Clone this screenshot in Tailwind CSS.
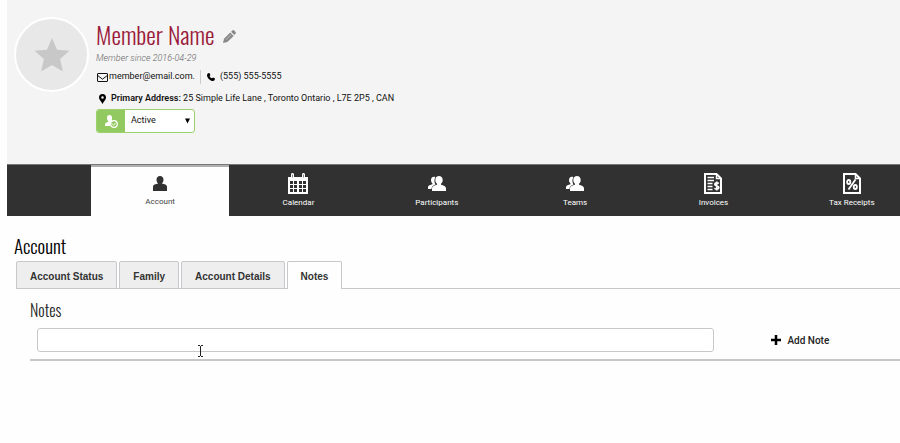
<!DOCTYPE html>
<html lang="en">
<head>
  <meta charset="UTF-8" />
  <meta name="viewport" content="width=device-width, initial-scale=1.0" />
  <title>Member Account</title>
  <script src="https://cdn.jsdelivr.net/npm/@tailwindcss/browser@4"></script>
</head>
<body class="relative min-h-screen overflow-x-hidden bg-[#fefefe] pl-[7px] font-[Roboto,sans-serif] text-[9px] text-[#111]">

  <!-- Shared icons -->
  <svg class="hidden">
    <symbol id="icon-group" viewBox="0 0 18 15">
      <path d="M6 0.8c-2 0-3 1.3-3 3.2 0 1.4.6 2.6 1.4 3.2v1C2.500 8.800 0 9.600 0 11v2h3.500c0-2.400 1.500-3.600 4-4.500C6.200 6.500 6 3.500 7.300 1.200 7 .9 6.500.8 6 .8z" />
      <path d="M11 0C9 0 7.300 1.500 7.300 3.900c0 1.700.7 3 1.700 3.800v1C6.500 9.400 4 10.200 4 12.200V15h14v-2.800c0-2-2.500-2.800-5-3.500v-1c1-.8 1.700-2.100 1.700-3.800C14.700 1.500 13 0 11 0z" />
    </symbol>
  </svg>

  <header class="flex h-[164px] gap-[7px] bg-[#f4f4f4] pt-4 pl-[7px]">
    <div class="mt-px flex size-[75px] shrink-0 items-center justify-center rounded-full border-2 border-white bg-[#e8e8e8]">
      <svg class="size-9 fill-[#c8c8c8]" viewBox="0 0 38 38"><path d="M19 1l5.300 12.500L37.500 14.500 27.500 23.200 30.500 36.500 19 29.500 7.500 36.500 10.500 23.200.5 14.500l13.200-1z" /></svg>
    </div>

    <div>
      <div class="flex h-9 items-center gap-2">
        <h1 class="font-[Oswald,'Roboto_Condensed',Roboto,sans-serif] text-[24px] leading-9 font-light text-[#9b1b3b]">Member Name</h1>
        <button type="button" aria-label="Edit name" class="pt-1">
          <svg class="size-[13px] fill-[#888]" viewBox="0 0 13 13"><path d="M1 8.700L7.200 2.500l3.500 3.500L4.300 12 0 13zM8 1.700L9.500.4c.5-.4 1-.4 1.500 0l1.600 1.600c.4.5.4 1 0 1.500L11.400 5z" /><path d="M3 9.700L8 4.700" fill="none" stroke="#ccc" stroke-width=".8" /></svg>
        </button>
      </div>
      <p class="h-[13px] text-[9px] leading-[13px] font-light text-[#666] italic">Member since 2016-04-29</p>
      <div class="mt-1 flex h-4 items-center text-[9px]">
        <svg class="mx-px h-[9px] w-[11px]" viewBox="0 0 11 9" fill="none" stroke="#111"><rect x=".5" y=".5" width="10" height="8" rx=".5" /><path d="M.7 2.500l4.800 3.700 4.800-3.700" /></svg>
        <a href="mailto:member@email.com" class="pr-[5px]">member@email.com.</a>
        <span class="h-[14px] w-px bg-[#ccc]"></span>
        <svg class="mr-[5px] ml-[6px] size-2 fill-black" viewBox="0 0 9 9"><path d="M1.300.4L2.700 0l1.200 2.200-1 1.100c.4 1.200 1.400 2.200 2.700 2.700l1.200-1L9 6.300l-.4 1.500C7.700 9.200 6 9.200 4.300 8.300 2 7 0 4.700 0 2.500 0 1.500.5.8 1.300.4z" /></svg>
        <a href="tel:5555555555">(555) 555-5555</a>
      </div>
      <p class="mt-1 flex h-5 items-center pl-[3px] text-[9px]">
        <svg class="mr-[5px] h-[10px] w-[7px] fill-black" viewBox="0 0 7 10"><path fill-rule="evenodd" d="M3.500 0A3.500 3.500 0 0 0 0 3.500C0 6 2.500 7.500 3.500 10 4.500 7.500 7 6 7 3.500A3.500 3.500 0 0 0 3.500 0zm0 2.200a1.300 1.300 0 1 1 0 2.600 1.300 1.300 0 0 1 0-2.600z" /></svg>
        <span><b class="font-semibold">Primary Address:</b> 25 Simple Life Lane , Toronto Ontario , L7E 2P5 , CAN</span>
      </p>
      <div class="flex h-6 w-[99px] overflow-hidden rounded-[3px] border border-[#9bd06b] bg-white">
        <label for="status" class="flex w-7 shrink-0 items-center justify-center bg-[#92c961]" aria-label="Member status">
          <svg class="size-[13px]" viewBox="0 0 13 13"><path fill="#fff" d="M4.500 0C2.900 0 2 1.200 2 2.900c0 1.300.5 2.300 1.200 2.900v.9C1.700 7.400 0 7.900 0 9.400V11h5C4.800 8.600 5.800 6.500 7.500 5.600 7 5.400 6.800 5 7 4.200 7.600 1.800 6.500 0 4.500 0z" /><circle cx="9" cy="9" r="3.300" fill="none" stroke="#fff" stroke-width="1.300" /><path d="M7.300 9l1.200 1.200 2.200-2.400" fill="none" stroke="#fff" /></svg>
        </label>
        <div class="relative flex-1">
          <select id="status" class="size-full appearance-none pl-[6px] text-[9px] outline-none">
            <option>Active</option>
            <option>Inactive</option>
          </select>
          <svg class="pointer-events-none absolute top-2 right-1 h-[6px] w-[5px]" viewBox="0 0 5 6"><path d="M0 .5h5L2.500 5.500z" /></svg>
        </div>
      </div>
    </div>
  </header>

  <nav class="flex h-[52px] overflow-hidden border-t border-[#777] bg-[#313131] pl-[84px] text-[8px] leading-3 text-white">
    <a href="#account" class="flex w-[17.100%] shrink-0 flex-col items-center gap-1 border-t-2 border-[#b0b0b0] bg-[#fefefe] pt-2 text-[#444]">
      <svg class="h-[17px] w-[14px] fill-[#313131]" viewBox="0 0 14 17"><path d="M7 1C4.900 1 3.500 2.500 3.500 4.700c0 1.700.8 3.100 1.800 3.900C2.500 9 0 9.700 0 12v4h14v-4c0-2.300-2.500-3-5.300-3.400 1-.8 1.800-2.200 1.800-3.900C10.500 2.500 9.100 1 7 1z" /></svg>
      Account
    </a>
    <a href="#calendar" class="flex w-[17.100%] shrink-0 flex-col items-center gap-[3px] pt-2">
      <svg class="h-[21px] w-5" viewBox="0 0 20 21"><path fill="#fff" d="M0 4h3V1.500C3 .6 3.600 0 4.500 0S6 .6 6 1.500V4h8V1.500c0-.9.6-1.500 1.500-1.500S17 .6 17 1.500V4h3v17H0z" /><path d="M4.500 1.500v3M15.500 1.500v3" stroke="#888" /><path fill="#313131" d="M2 8h3v3H2zm4 0h3v3H6zm5 0h3v3h-3zm4 0h3v3h-3zM2 12h3v3H2zm4 0h3v3H6zm5 0h3v3h-3zm4 0h3v3h-3zM2 16h3v3H2zm4 0h3v3H6zm5 0h3v3h-3zm4 0h3v3h-3z" /></svg>
      Calendar
    </a>
    <a href="#participants" class="flex w-[17.100%] shrink-0 flex-col items-center gap-[6px] pt-[11px]">
      <svg class="h-[15px] w-[18px] fill-white"><use href="#icon-group" /></svg>
      Participants
    </a>
    <a href="#teams" class="flex w-[17.100%] shrink-0 flex-col items-center gap-[6px] pt-[11px]">
      <svg class="h-[15px] w-[18px] fill-white"><use href="#icon-group" /></svg>
      Teams
    </a>
    <a href="#invoices" class="flex w-[17.100%] shrink-0 flex-col items-center gap-[3px] pt-2">
      <svg class="h-[21px] w-[18px]" viewBox="0 0 18 21" fill="none" stroke="#fff"><path stroke-width="2" d="M1 1h11.500L17 5.500V20H1z" /><path d="M12.500 1v4.500H17" stroke-width="1.500" /><path stroke-width="1.500" d="M3.500 4.500H10M3.500 7.500H10M3.500 10.500h5M3.500 13.500h5M3.500 16.500h5" /><path stroke-width="1.700" d="M14.800 10.500c-1-1-4-1-4 .8 0 2 4 1.200 4 3.200 0 1.900-3.200 1.900-4.300.7M12.700 8.500v9" /></svg>
      Invoices
    </a>
    <a href="#tax" class="flex w-[17.100%] shrink-0 flex-col items-center gap-[3px] pt-2">
      <svg class="h-[21px] w-[18px]" viewBox="0 0 18 21" fill="none" stroke="#fff"><path stroke-width="2" d="M1 1h11.500L17 5.500V20H1z" /><path d="M12.500 1v4.500H17" stroke-width="1.500" /><g stroke-width="1.800"><ellipse cx="5.700" cy="9" rx="1.600" ry="2" /><ellipse cx="12.300" cy="14" rx="1.600" ry="2" /><path d="M12.500 6.500l-7 10" /></g></svg>
      Tax Receipts
    </a>
  </nav>

  <main class="pt-4 pl-[7px]">
    <h2 class="h-[29px] font-[Oswald,'Roboto_Condensed',Roboto,sans-serif] text-[19px] leading-[26px] font-light text-black">Account</h2>
    <div class="ml-[2px] flex h-7 gap-[2px] border-b border-[#c8c8cc] font-['Liberation_Sans',Arial,sans-serif] text-[10px] font-bold text-[#333]">
      <button type="button" class="h-7 rounded-t-[2px] border border-[#c8c8cc] bg-[#eee] px-[13px] pt-[2px]">Account Status</button>
      <button type="button" class="h-7 rounded-t-[2px] border border-[#c8c8cc] bg-[#eee] px-[13px] pt-[2px]">Family</button>
      <button type="button" class="h-7 rounded-t-[2px] border border-[#c8c8cc] bg-[#eee] px-[13px] pt-[2px]">Account Details</button>
      <button type="button" class="h-7 rounded-t-[2px] border border-b-0 border-[#c8c8cc] bg-[#fefefe] px-[13px] pt-[2px]">Notes</button>
    </div>

    <section class="ml-4 border-b-2 border-[#c8c8cc] pt-2 pb-[7px]">
      <h3 class="font-[Oswald,'Roboto_Condensed',Roboto,sans-serif] text-[16px] leading-[26px] font-light text-[#222]">Notes</h3>
      <div class="mt-[5px] flex items-center pl-[7px]">
        <input type="text" aria-label="Note" class="h-6 w-[78.500%] rounded-[3px] border border-[#c8c8cc] bg-white px-2 text-[10px] outline-none" />
        <button type="button" class="ml-[57px] flex items-center gap-[6px] text-[10px] font-medium text-[#222]">
          <svg class="size-[10px]" viewBox="0 0 10 10" stroke="#000" stroke-width="2.500"><path d="M5 0v10M0 5h10" /></svg>
          Add Note
        </button>
      </div>
    </section>
  </main>

  <!-- Text cursor -->
  <svg class="pointer-events-none absolute top-[345px] left-[197px] h-3 w-[7px]" viewBox="0 0 7 12" fill="none" stroke="#222"><path d="M1 .5h2M4 .5h2M3.500 1v10M1 11.500h2M4 11.500h2" /></svg>

</body>
</html>
